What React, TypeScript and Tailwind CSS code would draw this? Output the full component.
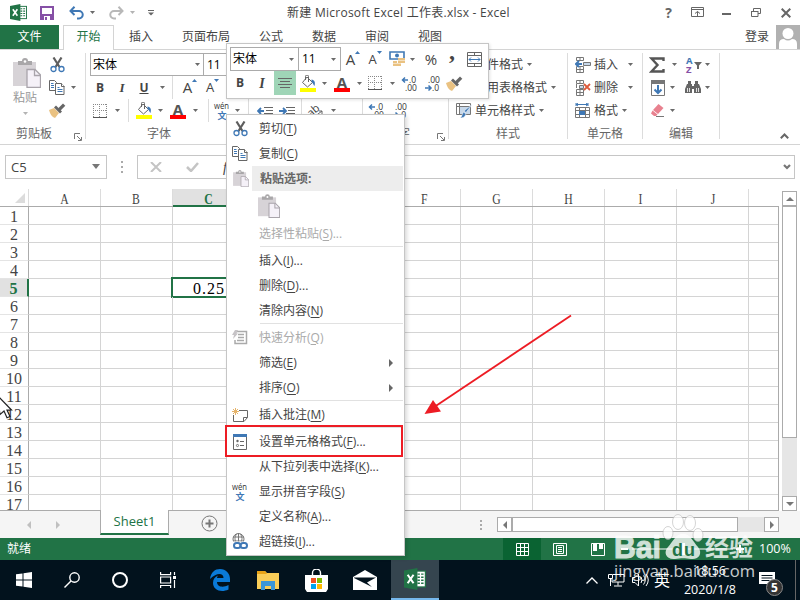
import React from 'react'

const ui = "font-['Open_Sans','Noto_Sans_CJK_SC',sans-serif]"

const Caret = ({ className = 'w-2' }: { className?: string }) => (
  <span className={`flex shrink-0 justify-center ${className}`}>
    <svg width="5" height="3" viewBox="0 0 5 3"><path d="M0 0h5L2.5 3z" fill="#6a6a6a" /></svg>
  </span>
)

const Cell = ({ className, children }: { className: string; children?: React.ReactNode }) => (
  <span className={`flex h-full shrink-0 items-center justify-center [&>svg]:shrink-0 ${className}`}>{children}</span>
)

const Divider = ({ className = 'w-[1px]' }: { className?: string }) => (
  <span className={`flex h-full shrink-0 justify-center ${className}`}>
    <span className="h-full w-px bg-[#dcdcdc]" />
  </span>
)

/* ---------- icons ---------- */

const ExcelIcon = ({ size = 17 }: { size?: number }) => (
  <svg width={size} height={size} viewBox="0 0 18 18">
    <rect x="9.5" y="2.5" width="8" height="13" fill="#fff" stroke="#217346" />
    <path d="M11 5h2M14 5h2M11 7.500h2M14 7.500h2M11 10h2M14 10h2M11 12.500h2M14 12.500h2" stroke="#217346" strokeWidth="1.200" />
    <path d="M0 2L11 0v18L0 16z" fill="#217346" />
    <path d="M3 5.500l4.800 7M7.800 5.500L3 12.500" stroke="#fff" strokeWidth="1.700" />
  </svg>
)

const SaveIcon = () => (
  <svg width="14" height="14" viewBox="0 0 14 14">
    <path d="M1 1h12v12H1z" fill="#fff" stroke="#8650a6" strokeWidth="2" />
    <path d="M1 8h12v5H1z" fill="#8650a6" />
    <path d="M4 10h6v4H4z" fill="#fff" /><path d="M5 11h2v3H5z" fill="#8650a6" />
  </svg>
)

const UndoIcon = ({ color, flip }: { color: string; flip?: boolean }) => (
  <svg width="15" height="14" viewBox="0 0 15 14" className={flip ? '-scale-x-100' : ''} fill="none" stroke={color} strokeWidth="2">
    <path d="M1.500 5H10a3.500 3.500 0 0 1 0 7.500H8" /><path d="M5.500 .8L1.500 5l4 4" />
  </svg>
)

const ScissorsIcon = () => (
  <svg width="15" height="16" viewBox="0 0 15 16" fill="none">
    <path d="M3.500 .5l6 9.500M11.500 .5l-6 9.500" stroke="#5e5e5e" strokeWidth="2.200" />
    <circle cx="3.500" cy="12" r="2.500" stroke="#3f78b5" strokeWidth="1.300" />
    <circle cx="11.500" cy="12" r="2.500" stroke="#3f78b5" strokeWidth="1.300" />
  </svg>
)

const CopyIcon = () => (
  <svg width="16" height="15" viewBox="0 0 16 15" fill="#fff" stroke="#666">
    <path d="M.5 .5h5l2 2v8h-7z" />
    <path d="M2 3.500h2.500M2 5.500h3M2 7.500h3" stroke="#3f78b5" />
    <path d="M6.500 3.500h6l2.500 2.500v8.500H6.500z" /><path d="M12.500 3.500v3h3" />
    <path d="M8.500 7.500h2M8.500 9.500h5M8.500 11.500h5" stroke="#3f78b5" />
  </svg>
)

const PasteIcon = ({ width, height }: { width: number; height: number }) => (
  <svg width={width} height={height} viewBox="0 0 28 30">
    <path d="M0 4h23v24H0z" fill="#d7d3d7" />
    <path d="M5 3h4a3 3 0 0 1 6 0h4v4H5z" fill="#a9a7a9" /><circle cx="12" cy="3.500" r="1.300" fill="#fff" />
    <path d="M14 11.500h8l5.500 5.500v12.500H14z" fill="#f5f1f8" stroke="#a9a4ab" strokeWidth="1.300" />
    <path d="M21.500 11.500v6h6" fill="none" stroke="#a9a4ab" strokeWidth="1.300" />
  </svg>
)

const BrushIcon = () => (
  <svg width="17" height="15" viewBox="0 0 17 15">
    <path d="M0 7l5-2 5 5-4 5c-3-1-5-4-6-8z" fill="#eac282" />
    <path d="M5 4.500l2-2 6 6-2 2z" fill="#666" /><path d="M9 5.500L14 .5l2.300 2.300-5 5z" fill="#666" />
  </svg>
)

const BucketIcon = () => (
  <svg width="17" height="17" viewBox="0 0 17 17">
    <path d="M7 2l5.500 5.500-5 4.500L2.500 7.500z" fill="#fff" stroke="#666" />
    <path d="M5.500 5V1.500a1.500 1.500 0 0 1 3 0V7" fill="none" stroke="#666" />
    <path d="M11.500 4.500c3 .5 4 2.500 3 6.500-1.500-1-1-3-3-4z" fill="#3f78b5" />
    <path d="M0 13h16v4H0z" fill="#ff0" />
  </svg>
)

const FontColorIcon = () => (
  <span className="flex h-[17px] w-4 flex-col items-center border-b-4 border-[#f00]">
    <span className="font-['Open_Sans'] text-[15px] leading-[14px] font-bold text-[#555]">A</span>
  </span>
)

const BordersIcon = () => (
  <svg width="14" height="14" viewBox="0 0 14 14" fill="none" stroke="#888">
    <path d="M.5 0v13M6.500 0v13M13.500 0v13M0 .5h14M0 6.500h14" strokeDasharray="1 1" />
    <path d="M0 13.500h14" stroke="#555" />
  </svg>
)

const SizeIcon = ({ up }: { up?: boolean }) => (
  <span className={`flex items-start font-['Open_Sans'] leading-[17px] text-[#444] ${up ? 'text-[15px]' : 'text-[13px]'}`}>
    A
    <svg width="5" height="3" viewBox="0 0 5 3"><path d={up ? 'M0 3h5L2.500 0z' : 'M0 0h5L2.500 3z'} fill="#3f78b5" /></svg>
  </span>
)

const DecimalIcon = ({ less }: { less?: boolean }) => (
  <svg width="15" height="15" viewBox="0 0 15 15" className="overflow-visible font-['Open_Sans']">
    <text x={less ? 3 : 7} y="7" fontSize="8.500" fill="#333">{less ? '.00' : '.0'}</text>
    <text x={less ? 7 : 3} y="15" fontSize="8.500" fill="#333">{less ? '.0' : '.00'}</text>
    {less
      ? <path d="M0 12h5.500M3.500 9.500L6 12l-2.500 2.500" fill="none" stroke="#3f78b5" strokeWidth="1.500" />
      : <path d="M.5 4H6M3 1.500L.5 4 3 6.500" fill="none" stroke="#3f78b5" strokeWidth="1.500" />}
  </svg>
)

const PhoneticIcon = () => (
  <svg width="16" height="16" viewBox="0 0 16 16" className="overflow-visible">
    <text x="0" y="6" fontSize="9.500" textLength="15" lengthAdjust="spacingAndGlyphs" className="font-['Open_Sans']" fill="#333">wén</text>
    <text x="3.500" y="15.500" fontSize="9" fontWeight="bold" className="font-['Noto_Sans_CJK_SC']" fill="#3f78b5">文</text>
  </svg>
)

const IndentIcon = ({ right }: { right?: boolean }) => (
  <svg width="16" height="10" viewBox="0 0 16 10" fill="none">
    <path d="M7 1.500h9M9 4.500h7M7 7.500h9" stroke="#666" />
    <path d={right ? 'M0 5h6M4 2l3 3-3 3' : 'M1 5h6M4 2L1 5l3 3'} stroke="#3f78b5" strokeWidth="1.800" />
  </svg>
)

const MoneyIcon = () => (
  <svg width="17" height="16" viewBox="0 0 17 16">
    <path d="M1 1h14v7H1z" fill="#fff" stroke="#3f78b5" strokeWidth="1.600" />
    <circle cx="8" cy="4.500" r="2" fill="#3f78b5" />
    <path d="M9 7h7v2.200H9zM9 9.800h7V12H9zM4 12.600h8V15H4zM4 10h4v2H4z" fill="#eac282" />
  </svg>
)

const MergeIcon = () => (
  <svg width="15" height="15" viewBox="0 0 15 15" fill="none" stroke="#666">
    <path d="M.5 .5h14v14H.5zM0 3.500h15M0 11.500h15M7.500 0v3M7.500 12v3" />
    <path d="M2 7.500h11M4 5.500l-2 2 2 2M11 5.500l2 2-2 2" stroke="#3f78b5" />
  </svg>
)

const LauncherIcon = () => (
  <svg width="8" height="8" viewBox="0 0 8 8" fill="none" stroke="#777">
    <path d="M.5 6V.5H6M3 3l4 4M7.500 4v3.500H4" />
  </svg>
)

const CellStyleIcon = () => (
  <svg width="17" height="16" viewBox="0 0 17 16">
    <path d="M.5 .5h14v11H.5zM0 3.500h15M3.500 0v12" fill="#fff" stroke="#777" />
    <path d="M4 4h10v7H4z" fill="#c7d8ea" />
    <path d="M16 1.500l-6 8-2-1.500zM7.500 9l2.500 2c-1 3-3 4-6 4 2-1 2-4 3.500-6z" fill="#3f78b5" stroke="#fff" strokeWidth=".5" />
  </svg>
)

const CellsIcon = ({ kind }: { kind: 'insert' | 'delete' | 'format' }) => {
  if (kind === 'format') {
    return (
      <svg width="16" height="16" viewBox="0 0 16 16" fill="none" stroke="#777">
        <path d="M1 1.500h12M3 0L1 1.500 3 3M11 0l2 1.500L11 3M1 0v3M13 0v3" stroke="#3f78b5" />
        <path d="M.5 4.500h14v10H.5zM4.500 4v11M10.500 4v11M0 7.500h15M0 11.500h15" />
        <path d="M4 8h6v4H4z" fill="#3f78b5" stroke="none" />
      </svg>
    )
  }
  return (
    <svg width="16" height="16" viewBox="0 0 16 16" fill="none" stroke="#777">
      <path d="M1.500 .5h7v3h-7zM5 0v3M1.500 9.500h7v6h-7zM5 9v6M1 12.500h8" />
      <path d={kind === 'insert' ? 'M8.500 5.500h7v3h-7z' : 'M4.500 5.500h4v3h-4zM1.500 4v4'} fill="#c7d8ea" />
      {kind === 'insert'
        ? <path d="M1 7h6M4 4L1 7l3 3" stroke="#3f78b5" strokeWidth="2" />
        : <path d="M9 4l6 6M15 4l-6 6" stroke="#dd5a3b" strokeWidth="1.800" />}
    </svg>
  )
}

const SortIcon = () => (
  <svg width="16" height="18" viewBox="0 0 16 18" className="overflow-visible font-['Open_Sans']">
    <text x="0" y="8" fontSize="9.500" fontWeight="bold" fill="#3f78b5">A</text>
    <text x="0" y="17" fontSize="9.500" fontWeight="bold" fill="#8650a6">Z</text>
    <path d="M8 6h8l-3 3.500V13h-2V9.500z" fill="#666" />
  </svg>
)

const BinocularsIcon = () => (
  <svg width="16" height="13" viewBox="0 0 16 13" fill="#666">
    <path d="M3 0h3v3h1v9H0V8l2-5h1zM13 0h-3v3H9v9h7V8l-2-5h-1z" />
    <path d="M7 5h2v3H7z" />
    <path d="M2.500 7v4M4.500 7v4M11.500 7v4M13.500 7v4" stroke="#fff" strokeWidth=".8" />
  </svg>
)

const EraserIcon = () => (
  <svg width="14" height="13" viewBox="0 0 14 13">
    <path d="M7.500 0l5 4-5.500 6-5-4z" fill="#e8818f" /><path d="M1.500 6.500l5 4L5 12H3L0 9.500z" fill="#e8818f" />
    <path d="M5 12.500h8" stroke="#777" />
  </svg>
)

const AnalysisIcon = () => (
  <svg width="16" height="15" viewBox="0 0 16 15" fill="none" stroke="#aaa">
    <path d="M5 1.500h9.500v12H3V10" strokeWidth="1.500" /><path d="M6 4.500h6M6 7.500h6M5 10.500h7" strokeWidth="1.400" />
    <path d="M3 0h3L4.500 3.500H6L1 9l1-4H0z" fill="#c6c3c6" stroke="none" />
  </svg>
)

const NoteIcon = () => (
  <svg width="17" height="14" viewBox="0 0 17 14" fill="none">
    <path d="M7 2.500h8.500v7l-3.500 4H1.500V7" stroke="#666" /><path d="M11.500 13V9.500h4" stroke="#666" />
    <path d="M3.500 0v7M0 3.500h7M1 1l5 5M6 1L1 6" stroke="#e5b36a" />
  </svg>
)

const FormatCellsIcon = () => (
  <svg width="14" height="16" viewBox="0 0 14 16" fill="none">
    <path d="M.5 1v14.500h13V1" stroke="#666" /><path d="M0 0h14v3H0z" fill="#3f78b5" />
    <circle cx="4.500" cy="7" r="1.200" fill="#666" /><circle cx="4.500" cy="11.500" r="1.100" stroke="#666" strokeWidth=".9" />
    <path d="M7 7.500h4M7 11.500h4" stroke="#666" />
  </svg>
)

const LinkIcon = () => (
  <svg width="16" height="17" viewBox="0 0 16 17" fill="none">
    <circle cx="6.500" cy="6" r="5.500" stroke="#777" /><path d="M1 4h11M1 8h11M6.500 0v12M4.500 1c-2 3-2 6 0 10M8.500 1c2 3 2 6 0 10" stroke="#777" />
    <path d="M0 8.500h16V17H0z" fill="#fff" />
    <rect x="2" y="10" width="6.500" height="5" rx="2.500" stroke="#3f78b5" strokeWidth="2" />
    <rect x="8.500" y="10" width="6.500" height="5" rx="2.500" stroke="#3f78b5" strokeWidth="2" />
  </svg>
)

/* ---------- title and tabs ---------- */

const TitleBar = () => (
  <div className="flex h-[25px] shrink-0 items-center text-[12px] text-[#444]">
    <Cell className="ml-[8px] w-5"><ExcelIcon /></Cell>
    <Cell className="ml-[9px] w-5"><SaveIcon /></Cell>
    <Cell className="ml-[8px] w-[22px]"><UndoIcon color="#3f78b5" /></Cell>
    <Caret className="w-[10px]" />
    <Cell className="ml-[8px] w-[22px]"><UndoIcon color="#b8b8b8" flip /></Cell>
    <Caret className="w-[10px] opacity-50" />
    <Cell className="ml-[8px] w-3">
      <svg width="6" height="6" viewBox="0 0 6 6"><path d="M0 .5h6" stroke="#666" /><path d="M0 2.500h6l-3 3z" fill="#666" /></svg>
    </Cell>
    <span className="ml-[130px] w-[226px] tracking-[0.26px] whitespace-nowrap">新建 Microsoft Excel 工作表.xlsx - Excel</span>
    <div className="ml-auto flex h-full items-center">
      <Cell className="w-[29px] text-[14px] font-bold text-[#666]">?</Cell>
      <Cell className="w-[29px]">
        <svg width="13" height="11" viewBox="0 0 13 11" fill="none" stroke="#666"><path d="M.5 .5h12v9H.5zM0 2.500h13M6.500 9V4.500M4 6.500l2.500-2 2.500 2" /></svg>
      </Cell>
      <Cell className="w-[29px] pt-[2px]"><span className="h-[2px] w-[9px] bg-[#666]" /></Cell>
      <Cell className="w-[30px]">
        <svg width="10" height="9" viewBox="0 0 10 9" fill="none" stroke="#666"><path d="M2.500 3V.5h7v5H7M0 3.500h7M.5 3v5.500H7V3" /></svg>
      </Cell>
      <Cell className="w-[29px]">
        <svg width="10" height="10" viewBox="0 0 10 10"><path d="M.7 .7l8.600 8.600M9.300 .7L.7 9.300" stroke="#666" strokeWidth="2" /></svg>
      </Cell>
    </div>
  </div>
)

const tabs = ['插入', '页面布局', '公式', '数据', '审阅', '视图']

const Tabs = () => (
  <div className="flex h-[25px] shrink-0 border-b border-[#d4d4d4] text-[12px] leading-[24px] text-[#444]">
    <div className="w-[59px] bg-[#217346] text-center text-white">文件</div>
    <div className="ml-1 h-[25px] w-[51px] border border-b-0 border-[#d4d4d4] bg-white text-center leading-[22px] text-[#217346]">开始</div>
    <div className="ml-[15px] flex gap-[29px]">
      {tabs.map((t) => <span key={t}>{t}</span>)}
    </div>
    <div className="ml-auto flex">
      <span className="mr-[7px]">登录</span>
      <svg width="24" height="24" viewBox="0 0 24 24">
        <path d="M0 0h24v24H0z" fill="#b1b1b1" /><circle cx="12" cy="8.500" r="5.500" fill="#fff" />
        <path d="M3 24v-5q0-5 5-5 4 3 8 0 5 0 5 5v5z" fill="#fff" />
      </svg>
    </div>
  </div>
)

/* ---------- ribbon ---------- */

const Label = ({ children }: { children: React.ReactNode }) => (
  <div className="flex h-[24px] items-center justify-center text-[12px] text-[#666]">{children}</div>
)

const row = 'flex h-[23px] items-center'

const Ribbon = () => (
  <div className="flex h-[95px] shrink-0 border-b border-[#d4d4d4] pt-[3px] text-[12px] text-[#444]">
    <div className="w-[85px] shrink-0">
      <div className="flex h-[69px]">
        <div className="flex w-[50px] flex-col items-center pt-[5px] text-[#999]">
          <span className="pl-[4px]"><PasteIcon width={28} height={30} /></span>
          <span className="leading-[19px]">粘贴</span>
          <Caret className="mt-[5px] opacity-50" />
        </div>
        <div className="w-[35px]">
          <div className={row}><Cell className="w-[14px]"><ScissorsIcon /></Cell></div>
          <div className={row}><Cell className="w-[14px]"><CopyIcon /></Cell><Caret className="ml-[5px] w-[8px]" /></div>
          <div className={row}><Cell className="w-[14px]"><BrushIcon /></Cell></div>
        </div>
      </div>
      <div className="flex h-[24px] items-center pl-4 text-[#666]">剪贴板<span className="mt-[5px] ml-[22px]"><LauncherIcon /></span></div>
    </div>
    <div className="h-[86px] w-px shrink-0 bg-[#dcdcdc]" />
    <div className="w-[362px] shrink-0 overflow-hidden pl-[4px]">
      <div className={row}>
        <div className="flex h-[23px] w-[114px] items-center justify-between border border-[#ababab] px-[2px] text-black">宋体<Caret className="w-[7px]" /></div>
        <div className="flex h-[23px] w-[60px] items-center border border-l-0 border-[#ababab] px-[3px] text-black">11</div>
      </div>
      <div className={row}>
        <Cell className="w-5 font-bold">B</Cell>
        <Cell className="w-6 font-['Liberation_Serif'] text-[13px] font-bold italic">I</Cell>
        <Cell className="w-5 font-bold underline">U</Cell>
        <Caret className="w-4" /><Divider className="w-[5px]" />
        <Cell className="w-[30px]"><SizeIcon up /></Cell>
        <Cell className="w-[15px]"><SizeIcon /></Cell>
      </div>
      <div className={row}>
        <Cell className="w-5"><BordersIcon /></Cell><Caret className="w-[15px]" /><Divider className="w-[7px]" />
        <Cell className="w-[24px]"><BucketIcon /></Cell><Caret className="w-[9px]" />
        <Cell className="w-[26px]"><FontColorIcon /></Cell><Caret className="w-[9px]" /><Divider className="w-[17px]" />
        <Cell className="w-[9px]"><PhoneticIcon /></Cell><Caret className="ml-[7px] w-[9px]" /><Divider className="w-[12px]" />
        <Cell className="w-[22px]"><IndentIcon /></Cell>
        <Cell className="w-[22px]"><IndentIcon right /></Cell><Divider className="w-[6px]" />
        <Cell className="w-[24px]">
          <svg width="16" height="14" viewBox="0 0 16 14" className="overflow-visible">
            <text x="0" y="10" fontSize="11" fill="#444" transform="rotate(-40 6 8)">ab</text>
            <path d="M6 13l8-6M11 7h3v3" fill="none" stroke="#666" />
          </svg>
        </Cell>
        <Caret className="w-[10px]" /><Divider className="w-[48px]" />
        <Cell className="-ml-[22px] w-[24px]"><DecimalIcon /></Cell>
        <Cell className="w-[22px]"><DecimalIcon less /></Cell>
      </div>
      <div className="flex h-[24px] items-center text-[#666]">
        <span className="ml-[57px]">字体</span>
        <span className="ml-[215px]">数字</span>
        <span className="mt-[5px] ml-[27px]"><LauncherIcon /></span>
      </div>
    </div>
    <div className="h-[86px] w-px shrink-0 bg-[#dcdcdc]" />
    <div className="w-[118px] shrink-0 whitespace-nowrap">
      <div className={row}><Cell className="mr-[2px] ml-[7px] w-[17px]"><CellStyleIcon /></Cell>条件格式<Caret className="w-[12px]" /></div>
      <div className={row}><Cell className="mr-[2px] ml-[7px] w-[17px]"><CellStyleIcon /></Cell>套用表格格式<Caret className="w-[12px]" /></div>
      <div className={row}><Cell className="mr-[2px] ml-[7px] w-[17px]"><CellStyleIcon /></Cell>单元格样式<Caret className="w-[12px]" /></div>
      <Label>样式</Label>
    </div>
    <div className="h-[86px] w-px shrink-0 bg-[#dcdcdc]" />
    <div className="w-[74px] shrink-0">
      <div className={row}><Cell className="mr-[3px] ml-[7px] w-4"><CellsIcon kind="insert" /></Cell>插入<Caret className="w-[24px]" /></div>
      <div className={row}><Cell className="mr-[3px] ml-[7px] w-4"><CellsIcon kind="delete" /></Cell>删除<Caret className="w-[24px]" /></div>
      <div className={row}><Cell className="mr-[3px] ml-[7px] w-4"><CellsIcon kind="format" /></Cell>格式<Caret className="w-[12px]" /></div>
      <Label>单元格</Label>
    </div>
    <div className="h-[86px] w-px shrink-0 bg-[#dcdcdc]" />
    <div className="w-[76px] shrink-0">
      <div className={row}>
        <Cell className="ml-[6px] w-4">
          <svg width="16" height="16" viewBox="0 0 16 16"><path d="M14.500 4V1.500H2.500L8.500 8l-6 6.500h12V12" fill="none" stroke="#555" strokeWidth="2.400" /></svg>
        </Cell>
        <Caret className="w-[18px]" /><Cell className="ml-[3px] w-4"><SortIcon /></Cell><Caret className="w-[10px]" />
      </div>
      <div className={row}>
        <Cell className="ml-[7px] w-4">
          <svg width="14" height="16" viewBox="0 0 14 16" fill="none"><path d="M.5 1v14.500h13V1" stroke="#777" /><path d="M0 0h14v4H0z" fill="#777" /><path d="M7 5v8M3.500 9.500L7 13l3.500-3.500" stroke="#3f78b5" strokeWidth="2" /></svg>
        </Cell>
        <Caret className="w-[13px]" /><Cell className="ml-[6px] w-4"><BinocularsIcon /></Cell><Caret className="w-[12px]" />
      </div>
      <div className={row}><Cell className="ml-[7px] w-4"><EraserIcon /></Cell><Caret className="w-[13px]" /></div>
      <Label>编辑</Label>
    </div>
    <div className="h-[86px] w-px shrink-0 bg-[#dcdcdc]" />
    <div className="flex flex-1 items-end justify-end pr-[11px] pb-[5px]">
      <svg width="9" height="6" viewBox="0 0 9 6"><path d="M.8 5.200L4.500 1.500l3.700 3.700" fill="none" stroke="#666" strokeWidth="2" /></svg>
    </div>
  </div>
)

const FormulaBar = () => (
  <div className="flex h-[44px] shrink-0 pt-[10px] pl-[5px] text-[12px] text-[#444]">
    <div className="flex h-6 w-[102px] items-center justify-between border border-[#c6c6c6] pt-px pr-[6px] pl-[5px] text-[13px]">
      C5<svg width="8" height="5" viewBox="0 0 8 5" className="mb-[3px]"><path d="M0 0h8L4 5z" fill="#777" /></svg>
    </div>
    <div className="flex h-6 w-[30px] flex-col items-center justify-center gap-[3px]">
      <i className="size-[2px] bg-[#aaa]" /><i className="size-[2px] bg-[#aaa]" /><i className="size-[2px] bg-[#aaa]" />
    </div>
    <div className="flex h-6 w-[658px] items-center border border-[#c6c6c6] pr-[3px] pl-[12px]">
      <svg width="12" height="10" viewBox="0 0 12 10"><path d="M1 0l10 10M11 0L1 10" stroke="#c4c4c4" strokeWidth="2" /></svg>
      <svg width="13" height="10" viewBox="0 0 13 10" className="ml-[24px]"><path d="M1 5l4 4 7-8" fill="none" stroke="#c4c4c4" strokeWidth="2.500" /></svg>
      <span className="ml-[24px] font-['Liberation_Serif'] text-[14px] italic">fx</span>
      <svg width="8" height="6" viewBox="0 0 8 6" className="ml-auto"><path d="M1 1l3 3 3-3" fill="none" stroke="#777" strokeWidth="2.200" /></svg>
    </div>
  </div>
)

/* ---------- sheet ---------- */

const columns = ['A', 'B', 'C', 'D', 'E', 'F', 'G', 'H', 'I', 'J']
const rows = Array.from({ length: 17 }, (_, i) => i + 1)

const ScrollButton = ({ d }: { d: string }) => (
  <div className="flex h-[15px] w-[15px] shrink-0 items-center justify-center border border-[#ababab] bg-white">
    <svg width="8" height="8" viewBox="0 0 8 8"><path d={d} fill="#777" /></svg>
  </div>
)

const Sheet = () => (
  <div className="flex h-[322px] shrink-0 bg-white">
    <div className="h-[322px] w-[779px] overflow-hidden border-b border-[#ababab]">
      <div className="flex h-[18px] border-b border-[#ababab] font-['Liberation_Serif'] text-[15px] text-[#444]">
        <div className="flex w-[29px] items-center justify-end border-r border-[#dcdcdc] pr-[3px]">
          <svg width="10" height="10" viewBox="0 0 10 10"><path d="M10 0v10H0z" fill="#dcdcdc" /></svg>
        </div>
        {columns.map((c) => (
          <div
            key={c}
            className={`w-[72px] border-r border-[#dcdcdc] text-center leading-[20px] ${c === 'C' ? 'h-[18px] border-b-2 border-b-[#217346] bg-[#e1e1e1] font-bold text-[#217346]' : ''}`}
          >
            <span className="inline-block scale-x-[0.78]">{c}</span>
          </div>
        ))}
      </div>
      <div className="h-[304px] overflow-hidden border-r border-[#ababab]">
        {rows.map((r) => (
          <div key={r} className="flex h-[18px]">
            <div className={`w-[29px] border-b border-b-[#e4e4e4] text-center font-['Liberation_Serif'] text-[16px] leading-[19px] ${r === 5 ? 'border-r-2 border-r-[#217346] bg-[#e1e1e1] font-bold text-[#217346]' : 'border-r border-r-[#ababab] text-[#444]'}`}>{r}</div>
            {columns.map((c) => (
              <div key={c} className="relative w-[72px] border-r border-b border-[#d4d4d4]">
                {r === 5 && c === 'C' && (
                  <div className="absolute -top-[2px] -left-[2px] h-[21px] w-[75px] border-2 border-[#217346] bg-white pl-[20px] font-['Liberation_Serif'] text-[16px] leading-[19px] tracking-[1px] text-black">0.25</div>
                )}
              </div>
            ))}
            <div className="flex-1 border-b border-[#d4d4d4]" />
          </div>
        ))}
      </div>
    </div>
    <div className="ml-[3px] flex w-[15px] flex-col pt-[2px]">
      <ScrollButton d="M0 6h8L4 2z" />
      <div className="h-[232px] border border-[#ababab] bg-white" />
      <div className="h-[58px] bg-[#e6e6e6]" />
      <ScrollButton d="M0 2h8L4 6z" />
    </div>
  </div>
)

const SheetTabs = () => (
  <div className="flex h-[27px] shrink-0 bg-[#f5f5f5]">
    <div className="flex w-[100px] items-center pl-[26px]">
      <svg width="36" height="8" viewBox="0 0 36 8"><path d="M5 0v8L1 4zM30 0v8l4-4z" fill="#c0c0c0" /></svg>
    </div>
    <div className="-mt-px flex h-[25px] w-[69px] items-center justify-center border-x border-b-2 border-x-[#ababab] border-b-[#217346] bg-white pt-px text-[13px] font-medium text-[#217346]">Sheet1</div>
    <svg width="17" height="17" viewBox="0 0 17 17" className="mt-[4px] ml-[32px]" fill="none" stroke="#777">
      <circle cx="8.500" cy="8.500" r="7.500" /><path d="M8.500 4.500v8M4.500 8.500h8" strokeWidth="2" />
    </svg>
    <div className="ml-[262px] flex w-[2px] flex-col justify-center gap-[2px]">
      <i className="size-[2px] bg-[#aaa]" /><i className="size-[2px] bg-[#aaa]" /><i className="size-[2px] bg-[#aaa]" />
    </div>
    <div className="mt-[6px] ml-[15px] flex h-[15px] w-[282px]">
      <ScrollButton d="M6 0v8L2 4z" />
      <div className="w-[226px] border border-[#ababab] bg-white" />
      <div className="flex-1 bg-[#e6e6e6]" />
      <ScrollButton d="M2 0v8l4-4z" />
    </div>
  </div>
)

const StatusBar = () => (
  <div className="flex h-[22px] shrink-0 items-center bg-[#217346] text-[12px] text-white">
    <span className="ml-[7px] w-[496px]">就绪</span>
    <Cell className="w-[38px] bg-[#0a6332]">
      <svg width="13" height="13" viewBox="0 0 13 13" fill="none" stroke="#fff"><path d="M.5 .5h12v12H.5zM4.500 0v13M8.500 0v13M0 4.500h13M0 8.500h13" /></svg>
    </Cell>
    <Cell className="w-[38px]">
      <svg width="14" height="13" viewBox="0 0 14 13" fill="none" stroke="#fff"><path d="M.5 .5h13v12H.5zM3.500 2.500h7v8h-7zM5 4.500h4M5 6.500h4M5 8.500h4" /></svg>
    </Cell>
    <Cell className="w-[38px]">
      <svg width="14" height="13" viewBox="0 0 14 13" fill="none" stroke="#fff"><path d="M.5 .5h13v12H.5z" /><path d="M2 1h4v7H2zM8 1h4v5H8z" fill="#fff" stroke="none" /></svg>
    </Cell>
    <svg width="124" height="12" viewBox="0 0 124 12" className="ml-[4px]" fill="#fff">
      <path d="M0 5h7v2H0zM11 5.500h101v1H11zM59 0h5v12h-5zM115 5h8v2h-8zM118 2h2v8h-2z" />
    </svg>
    <span className="ml-[14px] text-[12.5px]">100%</span>
  </div>
)

/* ---------- taskbar ---------- */

const Taskbar = () => (
  <div className="flex h-10 shrink-0 items-center bg-[#02121d] text-[12px] text-white">
    <Cell className="w-12">
      <svg width="16" height="16" viewBox="0 0 16 16" fill="#fff"><path d="M0 2.300L6.500 1.400v6.100H0zM7.500 1.200L16 0v7.500H7.500zM0 8.500h6.500v6.100L0 13.700zM7.500 8.500H16V16l-8.500-1.200z" /></svg>
    </Cell>
    <Cell className="w-12">
      <svg width="16" height="16" viewBox="0 0 16 16" fill="none" stroke="#fff" strokeWidth="1.400"><circle cx="10.500" cy="5.500" r="4.700" /><path d="M7 9L.5 15.500" /></svg>
    </Cell>
    <Cell className="w-12"><span className="size-4 rounded-full border-2 border-white" /></Cell>
    <Cell className="w-12">
      <svg width="16" height="16" viewBox="0 0 16 16" fill="none" stroke="#fff" strokeWidth="1.200"><path d="M.6 0v2.600h10V0M.6 5h10v6H.6zM.6 16v-2.500h10V16M14.500 0v3M14.500 8v8" /><path d="M13 4h3v3h-3z" fill="#fff" stroke="none" /></svg>
    </Cell>
    <Cell className="w-[55px]">
      <svg width="20" height="22" viewBox="0 0 20 22" fill="#0a7ad8"><path d="M0 10C1 3 5 0 10 0c6 0 10 4.500 10 10v3H7c0 5 6 6 11.500 3v4.500C11 24 3 21 3 14c0-4 2-6 5-7.500C7 8 7 9 7 9h6.500c0-5-6.500-6-13.500 1z" /></svg>
    </Cell>
    <Cell className="w-[42px]">
      <svg width="22" height="19" viewBox="0 0 22 19"><path d="M0 0h8l2 2h12v16H0z" fill="#f9cd58" /><path d="M0 0h8l2 3H0z" fill="#e8a317" /><path d="M4 19v-9h14v9h-4v-4H8v4z" fill="#3a96d8" /></svg>
    </Cell>
    <Cell className="w-[54px]">
      <svg width="23" height="23" viewBox="0 0 23 23"><path d="M0 6h23v14l-2 3H2l-2-3z" fill="#fff" /><path d="M7.500 6V4a4 4 0 0 1 8 0v2" fill="none" stroke="#fff" strokeWidth="1.400" /><path d="M6 9h5v5H6z" fill="#f25022" /><path d="M12 9h5v5h-5z" fill="#7fba00" /><path d="M6 15h5v5H6z" fill="#00a4ef" /><path d="M12 15h5v5h-5z" fill="#ffb900" /></svg>
    </Cell>
    <Cell className="w-[44px]">
      <svg width="24" height="20" viewBox="0 0 24 20"><path d="M0 7L12 0l12 7v13H0z" fill="#fff" /><path d="M1 7.500h22l-9 5 5 4.500L1 8z" fill="#02121d" /></svg>
    </Cell>
    <Cell className="ml-[4px] w-12 border-b-2 border-[#76b9ed] bg-[#35454f]"><ExcelIcon size={22} /></Cell>
    <div className="ml-auto flex h-full items-center">
      <Cell className="w-[24px]">
        <svg width="12" height="7" viewBox="0 0 12 7"><path d="M.5 6.500L6 1l5.500 5.500" fill="none" stroke="#fff" strokeWidth="1.300" /></svg>
      </Cell>
      <Cell className="w-[24px]">
        <svg width="17" height="14" viewBox="0 0 17 14" fill="none" stroke="#fff"><path d="M5 1.500h11v7.500H4V6M10 9v3.500M6 13h8M.5 1.500h4v4h-4zM2.500 5v8" /></svg>
      </Cell>
      <Cell className="w-[24px]">
        <svg width="17" height="14" viewBox="0 0 17 14" fill="none" stroke="#fff"><path d="M.5 4.500H3L6.500 1v12L3 9.500H.5zM9 4q2 3 0 6M11.500 2.500q3.500 4.500 0 9M14 1q4.500 6 0 12" /></svg>
      </Cell>
      <Cell className="w-[20px] text-[16px]">英</Cell>
      <div className="w-[76px] text-center text-[12.500px] leading-[19px]"><div>18:56</div><div>2020/1/8</div></div>
      <div className="ml-[11px] h-[20px] w-[36px]">
        <svg width="27" height="26" viewBox="0 0 27 26">
          <path d="M0 2h16v12h-4v4l-4-4H0z" fill="#fff" /><path d="M2.500 5.500h11M2.500 8h11M2.500 10.500h8" stroke="#02121d" />
          <circle cx="15.500" cy="17.500" r="8" fill="#333" stroke="#888" />
          <text x="12" y="22" fontSize="12" fontWeight="bold" fill="#fff">5</text>
        </svg>
      </div>
      <span className="mr-[4px] h-10 w-px bg-[#666]" />
    </div>
  </div>
)

/* ---------- floating layers ---------- */

const MiniToolbar = () => (
  <div className="absolute top-[43px] left-[226px] h-[56px] w-[263px] border border-[#c6c6c6] bg-white pt-[3px] pl-[3px] text-[12px] text-[#444] shadow-[1px_1px_3px_rgba(0,0,0,0.12)]">
    <div className="flex h-[24px] items-center">
      <div className="flex h-6 w-[69px] items-center justify-between border border-[#ababab] px-[2px] text-black">宋体<Caret className="w-[9px]" /></div>
      <div className="flex h-6 w-[42px] items-center justify-between border border-l-0 border-[#ababab] px-[3px] text-black">11<Caret className="w-[8px]" /></div>
      <Cell className="w-[24px]"><SizeIcon up /></Cell>
      <Cell className="w-[20px]"><SizeIcon /></Cell>
      <Cell className="w-[24px]"><MoneyIcon /></Cell>
      <Caret className="w-[7px]" />
      <Cell className="w-[30px] text-[15px]">%</Cell>
      <Cell className="w-[12px] pb-[16px] font-['Liberation_Serif'] text-[24px] font-bold">,</Cell>
      <Cell className="ml-[5px] w-[22px]"><MergeIcon /></Cell>
    </div>
    <div className="flex h-[24px] items-center">
      <Cell className="w-[20px] font-bold">B</Cell>
      <Cell className="w-[24px] font-['Liberation_Serif'] text-[14px] font-bold italic">I</Cell>
      <Cell className="w-[22px] bg-[#9fd5b7]">
        <svg width="14" height="11" viewBox="0 0 14 11"><path d="M0 .5h14M2 3.500h10M0 6.500h14M2 9.500h10" stroke="#666" /></svg>
      </Cell>
      <Cell className="w-[24px]"><BucketIcon /></Cell>
      <Caret className="w-[9px]" />
      <Cell className="w-[26px]"><FontColorIcon /></Cell>
      <Caret className="w-[8px]" />
      <Cell className="w-[24px]"><BordersIcon /></Cell>
      <Caret className="w-[10px]" />
      <Cell className="w-[24px]"><DecimalIcon /></Cell>
      <Cell className="w-[22px]"><DecimalIcon less /></Cell>
      <Cell className="w-[22px]"><BrushIcon /></Cell>
    </div>
  </div>
)

type Item = { text: string; hotkey: string; dots?: boolean; icon?: React.ReactNode; disabled?: boolean; sub?: boolean }

const MenuItem = ({ text, hotkey, dots, icon, disabled, sub }: Item) => (
  <div className={`flex h-[25px] items-center ${disabled ? 'text-[#aaa]' : ''}`}>
    <Cell className="mr-[6px] w-[26px]">{icon}</Cell>
    <span className="whitespace-nowrap">{text}(<span className="underline underline-offset-2">{hotkey}</span>){dots && '...'}</span>
    {sub && <svg width="5" height="8" viewBox="0 0 5 8" className="mr-[9px] ml-auto"><path d="M0 0l4 4-4 4z" fill="#666" /></svg>}
  </div>
)

const Separator = () => <div className="ml-[33px] h-[2px] border-t border-[#e1e1e1]" />

const ContextMenu = () => (
  <div className="absolute top-[114px] left-[226px] h-[442px] w-[179px] border border-[#c6c6c6] bg-white py-px pr-[1px] text-[12px] text-[#444] shadow-[2px_2px_4px_rgba(0,0,0,0.15)]">
    <MenuItem text="剪切" hotkey="T" icon={<ScissorsIcon />} />
    <MenuItem text="复制" hotkey="C" icon={<CopyIcon />} />
    <div className="flex h-[25px] items-center">
      <Cell className="w-[25px] pl-[2px]"><PasteIcon width={16} height={17} /></Cell>
      <div className="flex h-full flex-1 items-center bg-[#ededed] pl-[8px] font-bold text-[#666]">粘贴选项:</div>
    </div>
    <div className="flex h-[30px] items-center pl-[31px]"><PasteIcon width={22} height={24} /></div>
    <MenuItem text="选择性粘贴" hotkey="S" dots disabled />
    <Separator />
    <MenuItem text="插入" hotkey="I" dots />
    <MenuItem text="删除" hotkey="D" dots />
    <MenuItem text="清除内容" hotkey="N" />
    <Separator />
    <MenuItem text="快速分析" hotkey="Q" icon={<AnalysisIcon />} disabled />
    <MenuItem text="筛选" hotkey="E" sub />
    <MenuItem text="排序" hotkey="O" sub />
    <Separator />
    <MenuItem text="插入批注" hotkey="M" icon={<NoteIcon />} />
    <Separator />
    <MenuItem text="设置单元格格式" hotkey="F" dots icon={<FormatCellsIcon />} />
    <MenuItem text="从下拉列表中选择" hotkey="K" dots />
    <MenuItem text="显示拼音字段" hotkey="S" icon={<PhoneticIcon />} />
    <MenuItem text="定义名称" hotkey="A" dots />
    <MenuItem text="超链接" hotkey="I" dots icon={<LinkIcon />} />
  </div>
)

const Annotations = () => (
  <>
    <div className="absolute top-[425px] left-[225px] h-[32px] w-[178px] border-2 border-[#ed1c24]" />
    <svg width="150" height="102" viewBox="0 0 150 102" className="absolute top-[314px] left-[423px]">
      <path d="M148 1.500L12 92.500" stroke="#ed1c24" strokeWidth="1.800" /><path d="M1.500 100L10 86l8 11.500z" fill="#ed1c24" />
    </svg>
    <svg width="14" height="22" viewBox="0 0 14 22" className="absolute top-[397px] left-0">
      <path d="M-3 -2L11.500 13H7l3 6.500-3 1.200L4 14l-4 3.500z" fill="#fff" stroke="#222" strokeWidth="1.200" />
    </svg>
  </>
)

const Watermark = () => (
  <svg width="160" height="70" viewBox="0 0 160 70" className="absolute top-[512px] left-[605px] font-['Liberation_Sans','Noto_Sans_CJK_SC',sans-serif]">
    <g fill="#fff" opacity=".78">
      <g stroke="#bbb" strokeWidth=".8">
        <ellipse cx="63" cy="21" rx="5" ry="6.500" /><ellipse cx="73" cy="10" rx="5.500" ry="7.500" />
        <ellipse cx="85" cy="11" rx="5.500" ry="7.500" /><ellipse cx="93" cy="23" rx="5" ry="6.500" />
      </g>
      <path d="M78 22c8 0 10 8 15 13 5 6 1 13-7 12-6-1-10-1-16 0-9 1-12-7-7-12 5-5 7-13 15-13z" />
      <text x="9" y="46" fontSize="31" fontWeight="bold" textLength="47" lengthAdjust="spacingAndGlyphs" stroke="#fff">Bai</text>
      <text x="100" y="44" fontSize="24" fontWeight="bold" textLength="48">经验</text>
      <text x="9" y="65" fontSize="16" textLength="141" lengthAdjust="spacingAndGlyphs" className="font-['Open_Sans']">jingyan.baidu.com</text>
    </g>
    <text x="67" y="44" fontSize="18" fontWeight="bold" textLength="23" fill="#217346">du</text>
  </svg>
)

const App = () => {
  return (
    <div className={`relative flex h-[600px] w-[800px] flex-col overflow-hidden bg-white ${ui}`}>
      <TitleBar />
      <Tabs />
      <Ribbon />
      <FormulaBar />
      <Sheet />
      <SheetTabs />
      <StatusBar />
      <Taskbar />
      <MiniToolbar />
      <ContextMenu />
      <Annotations />
      <Watermark />
    </div>
  )
}

export default App
